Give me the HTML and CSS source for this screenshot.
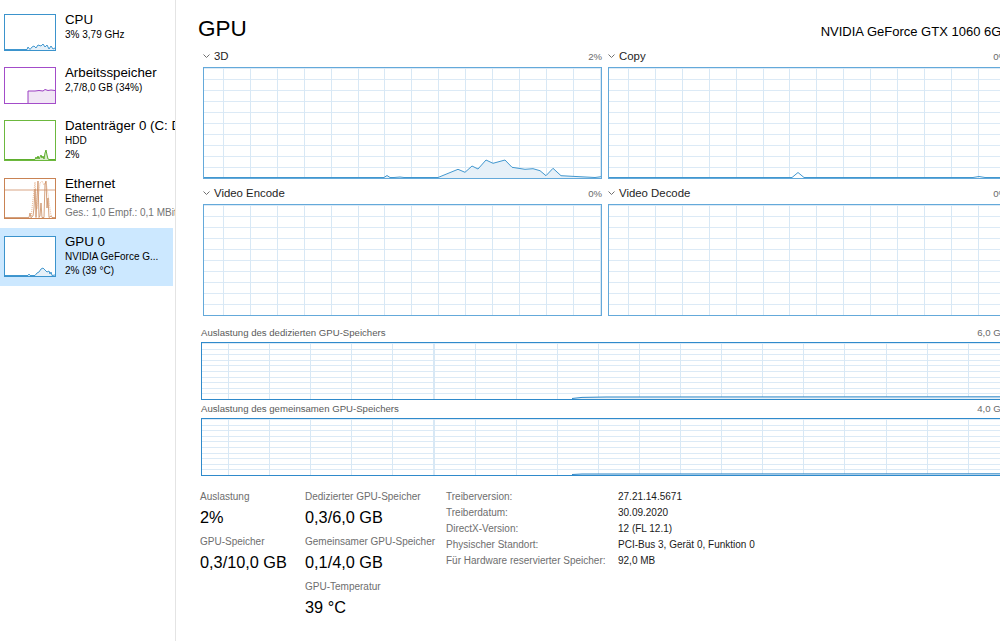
FILE: index.html
```html
<!DOCTYPE html>
<html lang="de">
<head>
    <meta charset="UTF-8">
    <meta name="viewport" content="width=device-width, initial-scale=1.0">
    <title>Task-Manager - Leistung</title>
    <link rel="stylesheet" href="styles.css">
</head>
<body>
    <div class="sidebar">
        <div class="item">
            <div class="thumb thumb-cpu">
                <svg viewBox="0 0 50 35" preserveAspectRatio="none">
                    <polygon class="fill-blue" points="0,35 22,35 23,32 25,35 27,32 29,31 31,33 33,30 36,31 38,29 40,32 42,30 44,34 46,31 48,34 50,33 50,35"/>
                    <polyline class="line-blue" points="0,34.5 22,34.5 23,32 25,34.5 27,32 29,31 31,33 33,30 36,31 38,29 40,32 42,30 44,34 46,31 48,34 50,33"/>
                </svg>
            </div>
            <div class="item-text">
                <div class="item-title">CPU</div>
                <div class="item-sub">3% 3,79 GHz</div>
            </div>
        </div>
        <div class="item">
            <div class="thumb thumb-mem">
                <svg viewBox="0 0 50 35" preserveAspectRatio="none">
                    <polygon class="fill-purple" points="23,35 23,23 30,23 34,22.5 38,23 40,21.5 43,22.5 46,22 50,22.5 50,35"/>
                    <polyline class="line-purple" points="23,35 23,23 30,23 34,22.5 38,23 40,21.5 43,22.5 46,22 50,22.5"/>
                </svg>
            </div>
            <div class="item-text">
                <div class="item-title">Arbeitsspeicher</div>
                <div class="item-sub">2,7/8,0 GB (34%)</div>
            </div>
        </div>
        <div class="item item-tall">
            <div class="thumb thumb-disk">
                <svg viewBox="0 0 50 39" preserveAspectRatio="none">
                    <polygon class="fill-green" points="30,39 31,36 32,38 33,35 34,38 36,34 37,37 38,35 39,38 40,32 41,29 42,34 43,38 44,39"/>
                    <polyline class="line-green" points="0,38.5 30,38.5 31,36 32,38 33,35 34,38 36,34 37,37 38,35 39,38 40,32 41,29 42,34 43,38 44,38.5 50,38.5"/>
                </svg>
            </div>
            <div class="item-text">
                <div class="item-title">Datenträger 0 (C: D:)</div>
                <div class="item-sub">HDD</div>
                <div class="item-sub">2%</div>
            </div>
        </div>
        <div class="item item-tall">
            <div class="thumb thumb-eth">
                <svg viewBox="0 0 50 39" preserveAspectRatio="none">
                    <line class="line-orange-grid" x1="0" y1="11" x2="50" y2="11"/>
                    <polyline class="line-orange-light" points="26,39 28,20 30,3 32,30 35,4 37,2 39,6 41,3 43,15 45,30 46,36 48,39"/>
                    <polyline class="line-orange" points="0,38.5 24,38.5 25,34 26,38.5 28,37 29,29 30,10 31,38.5 33,2 34,38.5 35,37 36,24 37,38.5 39,38.5 40,5 41,2 42,29 43,19 44,38.5 46,37 47,38.5 50,38.5"/>
                </svg>
            </div>
            <div class="item-text">
                <div class="item-title">Ethernet</div>
                <div class="item-sub">Ethernet</div>
                <div class="item-sub item-muted">Ges.: 1,0 Empf.: 0,1 MBit/s</div>
            </div>
        </div>
        <div class="item item-tall selected">
            <div class="thumb thumb-gpu">
                <svg viewBox="0 0 50 39" preserveAspectRatio="none">
                    <polygon class="fill-blue" points="30,39 32,36 34,35 36,32 38,31 40,33 42,35 44,34 45,37 46,35 47,39"/>
                    <polyline class="line-blue" points="0,38.5 23,38.5 24,37 25,38.5 30,38.5 32,36 34,35 36,32 38,31 40,33 42,35 44,34 45,37 46,35 47,38.5 50,38"/>
                </svg>
            </div>
            <div class="item-text">
                <div class="item-title">GPU 0</div>
                <div class="item-sub">NVIDIA GeForce G...</div>
                <div class="item-sub">2% (39 °C)</div>
            </div>
        </div>
    </div>

    <div class="main">
        <div class="head">
            <h1>GPU</h1>
            <div class="gpu-name">NVIDIA GeForce GTX 1060 6GB</div>
        </div>

        <div class="engines">
            <div class="engine">
                <div class="engine-head">
                    <svg class="chev" viewBox="0 0 7 4"><polyline points="0.5,0.5 3.5,3.5 6.5,0.5"/></svg>
                    <span class="engine-name">3D</span>
                    <span class="engine-pct">2%</span>
                </div>
                <div class="chart">
                    <svg viewBox="0 0 397 110" preserveAspectRatio="none">
                        <polygon class="fill-blue" points="180,110 183,107.5 186,109.5 190,109.5 196,109 200,110 234,110 254,101.3 261,104.3 268,98 274,101 282,92 289,95.3 301,92 308,99.3 321,101.3 329,100.7 336,102.7 342,107.7 349,100.3 357,107.7 368,108.3 391,109.7 397,108.7 397,110"/>
                        <polyline class="line-blue" points="0,109.5 180,109.5 183,107.5 186,109.5 190,109.5 196,109 200,109.5 234,109.5 254,101.3 261,104.3 268,98 274,101 282,92 289,95.3 301,92 308,99.3 321,101.3 329,100.7 336,102.7 342,107.7 349,100.3 357,107.7 368,108.3 391,109.5 397,108.7"/>
                    </svg>
                </div>
            </div>
            <div class="engine">
                <div class="engine-head">
                    <svg class="chev" viewBox="0 0 7 4"><polyline points="0.5,0.5 3.5,3.5 6.5,0.5"/></svg>
                    <span class="engine-name">Copy</span>
                    <span class="engine-pct">0%</span>
                </div>
                <div class="chart">
                    <svg viewBox="0 0 397 110" preserveAspectRatio="none">
                        <polyline class="line-blue" points="0,109.5 183,109.5 189,104.5 195,109.5 364,109.5 370,108.5 376,109.5 397,109.5"/>
                    </svg>
                </div>
            </div>
            <div class="engine">
                <div class="engine-head">
                    <svg class="chev" viewBox="0 0 7 4"><polyline points="0.5,0.5 3.5,3.5 6.5,0.5"/></svg>
                    <span class="engine-name">Video Encode</span>
                    <span class="engine-pct">0%</span>
                </div>
                <div class="chart"></div>
            </div>
            <div class="engine">
                <div class="engine-head">
                    <svg class="chev" viewBox="0 0 7 4"><polyline points="0.5,0.5 3.5,3.5 6.5,0.5"/></svg>
                    <span class="engine-name">Video Decode</span>
                    <span class="engine-pct">0%</span>
                </div>
                <div class="chart"></div>
            </div>
        </div>

        <div class="mem">
            <div class="mem-head">
                <span>Auslastung des dedizierten GPU-Speichers</span>
                <span class="mem-max">6,0 GB</span>
            </div>
            <div class="chart chart-mem">
                <svg viewBox="0 0 804 56" preserveAspectRatio="none">
                    <polygon class="fill-blue" points="370,56 380,54.4 404,54 804,53.8 804,56"/>
                    <polyline class="line-mem" points="370,55.5 380,54.4 404,54 804,53.8"/>
                </svg>
            </div>
        </div>
        <div class="mem mem-shared">
            <div class="mem-head">
                <span>Auslastung des gemeinsamen GPU-Speichers</span>
                <span class="mem-max">4,0 GB</span>
            </div>
            <div class="chart chart-mem">
                <svg viewBox="0 0 804 56" preserveAspectRatio="none">
                    <polygon class="fill-blue" points="370,56 380,55 804,54.8 804,56"/>
                    <polyline class="line-mem" points="370,55.5 380,55 804,54.8"/>
                </svg>
            </div>
        </div>

        <div class="stats">
            <div class="stat-col col-a">
                <div class="stat">
                    <div class="stat-label">Auslastung</div>
                    <div class="stat-value">2%</div>
                </div>
                <div class="stat">
                    <div class="stat-label">GPU-Speicher</div>
                    <div class="stat-value">0,3/10,0 GB</div>
                </div>
            </div>
            <div class="stat-col col-b">
                <div class="stat">
                    <div class="stat-label">Dedizierter GPU-Speicher</div>
                    <div class="stat-value">0,3/6,0 GB</div>
                </div>
                <div class="stat">
                    <div class="stat-label">Gemeinsamer GPU-Speicher</div>
                    <div class="stat-value">0,1/4,0 GB</div>
                </div>
                <div class="stat">
                    <div class="stat-label">GPU-Temperatur</div>
                    <div class="stat-value">39 °C</div>
                </div>
            </div>
            <table class="info">
                <tr><td class="info-key">Treiberversion:</td><td>27.21.14.5671</td></tr>
                <tr><td class="info-key">Treiberdatum:</td><td>30.09.2020</td></tr>
                <tr><td class="info-key">DirectX-Version:</td><td>12 (FL 12.1)</td></tr>
                <tr><td class="info-key">Physischer Standort:</td><td>PCI-Bus 3, Gerät 0, Funktion 0</td></tr>
                <tr><td class="info-key">Für Hardware reservierter Speicher:</td><td>92,0 MB</td></tr>
            </table>
        </div>
    </div>
</body>
</html>
```

FILE: styles.css
```css
html,
body {
    margin: 0;
    height: 100%;
    overflow: hidden;
}
body {
    display: flex;
    background-color: #fff;
    font-family: 'Liberation Sans', Arial, sans-serif;
    color: #000;
}

/* Left column with the resource list */
.sidebar {
    flex: none;
    width: 175px;
    height: 100%;
    border-right: 1px solid #e4e4e4;
    padding-top: 6px;
    box-sizing: content-box;
    overflow: hidden;
}
.item {
    display: flex;
    width: 173px;
    padding: 8px 0 8px 4px;
    box-sizing: border-box;
    white-space: nowrap;
}
.item.selected {
    background-color: #cce8ff;
}
.thumb {
    flex: none;
    width: 52px;
    height: 37px;
    border: 1px solid #3b93cc;
    box-sizing: border-box;
    background: #fff;
    margin-right: 9px;
}
.item-tall .thumb {
    height: 41px;
}
.thumb svg {
    display: block;
    width: 100%;
    height: 100%;
}
.thumb-mem { border-color: #a34cc9; }
.thumb-disk { border-color: #6cb83e; }
.thumb-eth { border-color: #c98354; }

.item-text {
    margin-top: -2px;
}
.item-title {
    font-size: 13.3px;
    line-height: 16px;
}
.item-sub {
    font-size: 10px;
    line-height: 14px;
}
.item-muted {
    color: #737373;
}

/* Graph strokes and fills */
svg polyline,
svg line {
    fill: none;
    stroke-width: 1;
    vector-effect: non-scaling-stroke;
}
.line-blue { stroke: #4197cf; }
.fill-blue { fill: #e6f0f8; }
.line-purple { stroke: #9b3fc2; }
.fill-purple { fill: #f1e6f5; }
.line-green { stroke: #5fae2e; }
.fill-green { fill: #d8edc8; }
.line-orange { stroke: #c98a5e; stroke-width: 0.8; }
.line-orange-grid { stroke: #d9a585; }
.line-orange-light { stroke: #eab996; stroke-dasharray: 1 1; }
.line-mem { stroke: #2f88c8; }

/* Main panel */
.main {
    flex: none;
    width: 806px;
    padding: 17px 0 0 25px;
}
.head {
    display: flex;
    align-items: baseline;
    justify-content: space-between;
    height: 24px;
}
h1 {
    margin: 0 0 0 -3px;
    font-size: 22.5px;
    font-weight: normal;
    line-height: 24px;
}
.gpu-name {
    font-size: 13px;
    margin-right: -3px;
}

.engines {
    display: grid;
    grid-template-columns: 1fr 1fr;
    column-gap: 6px;
    row-gap: 6px;
    margin: 7px 0 0 2px;
}
.engine-head {
    display: flex;
    align-items: center;
    height: 16px;
}
.chev {
    width: 7px;
    height: 4px;
    margin-right: 4px;
}
.chev polyline {
    stroke: #707070;
}
.engine-name {
    font-size: 11.4px;
    color: #1e1e1e;
}
.engine-pct {
    margin-left: auto;
    font-size: 9.6px;
    color: #6a6a6a;
}

.chart {
    height: 112px;
    margin-top: 3px;
    border: 1px solid #64a9da;
    box-sizing: border-box;
    background-color: #fff;
    background-image:
        repeating-linear-gradient(to right, transparent 0 19px, #d8e8f5 19px 20px, transparent 20px 26.9px),
        repeating-linear-gradient(to bottom, #dceaf6 0 1px, transparent 1px 11px);
}
.chart svg {
    display: block;
    width: 100%;
    height: 100%;
}

.mem {
    margin-top: 9px;
}
.mem-shared {
    margin-top: 1px;
}
.mem-head {
    display: flex;
    justify-content: space-between;
    height: 16px;
    line-height: 16px;
    font-size: 9.6px;
    color: #5a5a5a;
}
.mem-max {
    color: #6a6a6a;
}
.chart-mem {
    height: 58px;
    margin-top: 1px;
    border-color: #2f8acb;
    background-image:
        repeating-linear-gradient(to right, transparent 0 26px, #d8e8f5 26px 27px, transparent 27px 41.1px),
        repeating-linear-gradient(to bottom, #dceaf6 0 1px, transparent 1px 5.6px);
}

/* Figures below the graphs */
.stats {
    display: flex;
    margin-top: 13px;
}
.stat-col {
    flex: none;
}
.col-a {
    width: 105px;
    margin-left: -1px;
}
.col-b {
    width: 141px;
}
.stat {
    margin-bottom: 3px;
}
.stat-label {
    font-size: 10px;
    line-height: 15px;
    color: #6e6e6e;
}
.stat-value {
    font-size: 16.3px;
    line-height: 27px;
}
.info {
    border-collapse: collapse;
    margin-top: 0;
    align-self: flex-start;
    font-size: 10px;
}
.info td {
    padding: 0;
    line-height: 16px;
    white-space: nowrap;
    color: #1a1a1a;
}
.info td.info-key {
    width: 172px;
    color: #6e6e6e;
}
```
